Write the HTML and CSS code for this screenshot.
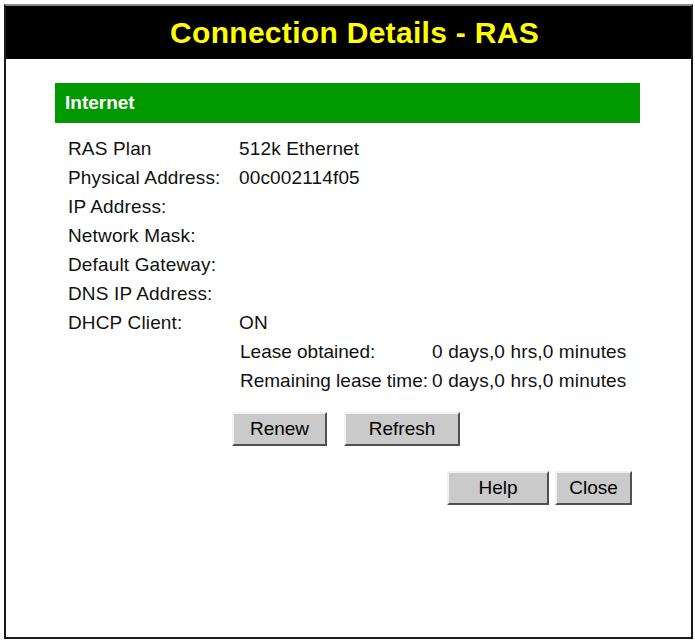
FILE: index.html
```html
<!DOCTYPE html>
<html>
<head>
<meta charset="utf-8">
<title>Connection Details - RAS</title>
<link rel="stylesheet" href="styles.css">
</head>
<body>
<div class="frame">
  <div class="header"><h1 class="title">Connection Details - RAS</h1></div>
  <div class="content">
    <div class="section-bar">Internet</div>
    <div class="info">
      <div class="label">RAS Plan</div><div class="value">512k Ethernet</div>
      <div class="label">Physical Address:</div><div class="value">00c002114f05</div>
      <div class="label">IP Address:</div><div class="value"></div>
      <div class="label">Network Mask:</div><div class="value"></div>
      <div class="label">Default Gateway:</div><div class="value"></div>
      <div class="label">DNS IP Address:</div><div class="value"></div>
      <div class="label">DHCP Client:</div><div class="value">ON</div>
      <div class="lease">
        <div class="lease-label">Lease obtained:</div><div class="lease-value">0 days,0 hrs,0 minutes</div>
        <div class="lease-label">Remaining lease time:</div><div class="lease-value">0 days,0 hrs,0 minutes</div>
      </div>
      <div class="actions">
        <button class="btn btn-renew">Renew</button>
        <button class="btn btn-refresh">Refresh</button>
      </div>
    </div>
    <div class="footer-actions">
      <button class="btn btn-help">Help</button>
      <button class="btn btn-close">Close</button>
    </div>
  </div>
</div>
</body>
</html>
```

FILE: styles.css
```css
html, body {
  margin: 0;
  padding: 0;
  background: #ffffff;
}

body {
  font-family: "Liberation Sans", Arial, sans-serif;
  color: #000000;
}

.frame {
  box-sizing: border-box;
  width: 689px;
  height: 635px;
  margin: 4px 0 0 4px;
  border: 2px solid #1a1a1a;
  border-top-color: #8a8a8a;
  background: #ffffff;
}

.header {
  height: 53px;
  background: #000000;
  text-align: center;
  padding-left: 12px;
}

.title {
  margin: 0;
  font-size: 30px;
  line-height: 53px;
  font-weight: bold;
  letter-spacing: 0.3px;
  color: #ffff00;
}

.content {
  padding: 24px 51px 0 49px;
}

.section-bar {
  height: 40px;
  line-height: 40px;
  background: #009900;
  color: #ffffff;
  font-weight: bold;
  font-size: 19px;
  padding-left: 10px;
}

.info {
  display: grid;
  grid-template-columns: 171px 1fr;
  margin-top: 11px;
  padding-left: 13px;
  font-size: 19px;
  line-height: 29px;
  letter-spacing: 0.15px;
  white-space: nowrap;
  color: #111111;
}

.value {
  min-height: 29px;
}

.lease {
  grid-column: 2;
  display: grid;
  grid-template-columns: 192px auto;
  padding-left: 1px;
}

.lease-label {
  letter-spacing: 0;
}

.actions {
  grid-column: 2;
  display: flex;
  gap: 17px;
  margin: 17px 0 0 -7px;
}

.footer-actions {
  display: flex;
  justify-content: flex-end;
  gap: 6px;
  margin-top: 25px;
  padding-right: 8px;
}

.btn {
  box-sizing: border-box;
  height: 34px;
  padding: 0;
  font-family: "Liberation Sans", Arial, sans-serif;
  font-size: 19px;
  color: #000000;
  background: #cacaca;
  border: 2px solid;
  border-color: #f2f2f2 #505050 #505050 #f2f2f2;
  border-radius: 0;
}

.btn-renew { width: 95px; }
.btn-refresh { width: 116px; }
.btn-help { width: 102px; }
.btn-close { width: 77px; }
```
